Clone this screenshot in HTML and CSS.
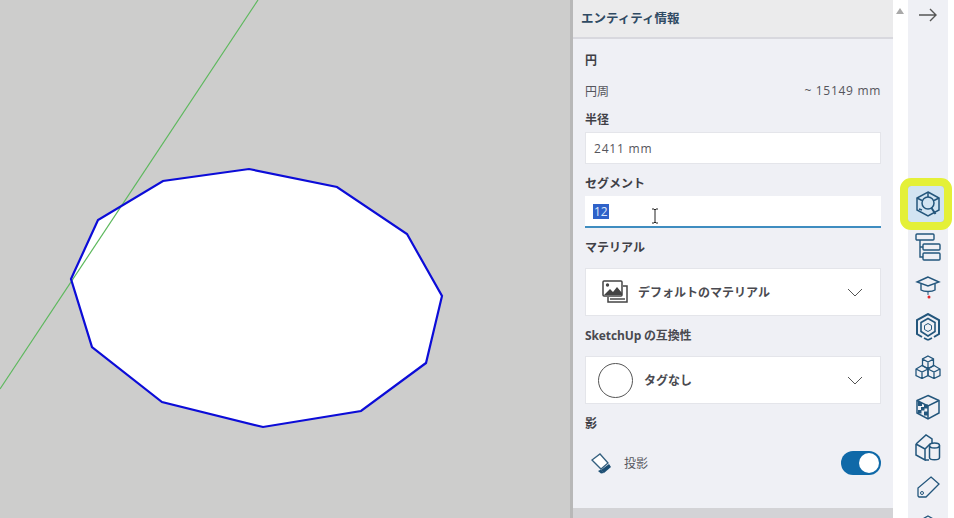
FILE: index.html
```html
<!DOCTYPE html>
<html lang="ja">
<head>
  <meta charset="UTF-8">
  <title>エンティティ情報</title>
  <link rel="stylesheet" href="styles.css">
</head>
<body>

  <!-- Viewport -->
  <div class="viewport">
    <svg class="scene" viewBox="0 0 570 518" width="570" height="518">
      <polygon points="71,279 98,220 163,181 249,169 337,187 407,234 442,296 426,363 361,411 263,427 162,402 92,347" fill="#fff"/>
      <line x1="258" y1="0" x2="0" y2="389" stroke="#5cb85c" stroke-width="1.2"/>
      <polygon points="71,279 98,220 163,181 249,169 337,187 407,234 442,296 426,363 361,411 263,427 162,402 92,347" fill="none" stroke="#0c0cd8" stroke-width="2.2"/>
    </svg>
  </div>

  <!-- Panel -->
  <div class="panel">
    <div class="panel-head">エンティティ情報</div>
    <div class="panel-body">
      <div class="label first">円</div>
      <div class="row-info">
        <span>円周</span>
        <span class="latin">~ 15149 mm</span>
      </div>
      <div class="label">半径</div>
      <div class="field latin">2411 mm</div>
      <div class="label label-seg">セグメント</div>
      <div class="field field-active latin">
        <span class="selected">12</span>
        <svg class="ibeam" width="8" height="16" viewBox="0 0 8 16">
          <path d="M1 1h2l1 1 1-1h2M4 2v12M1 15h2l1-1 1 1h2" fill="none" stroke="#222" stroke-width="1"/>
        </svg>
      </div>
      <div class="label label-mat">マテリアル</div>
      <div class="select">
        <svg class="mat-icon" width="26" height="24" viewBox="0 0 26 24">
          <rect x="1" y="1" width="19" height="15" rx="1" fill="#fff" stroke="#444" stroke-width="1.5"/>
          <path d="M2 15l6-6 3 3 4-5 5 6v2H2z" fill="#444"/>
          <circle cx="5.5" cy="5" r="1.7" fill="#444"/>
          <path d="M21 6h4v16H6v-5" fill="none" stroke="#444" stroke-width="1.5"/>
          <path d="M8 19h15" stroke="#777" stroke-width="2"/>
        </svg>
        <span class="select-text">デフォルトのマテリアル</span>
        <svg class="chevron" width="16" height="9" viewBox="0 0 16 9"><path d="M1 1l7 7 7-7" fill="none" stroke="#555" stroke-width="1"/></svg>
      </div>
      <div class="label label-compat"><span class="latin">SketchUp</span> の互換性</div>
      <div class="select">
        <span class="tag-circle"></span>
        <span class="select-text">タグなし</span>
        <svg class="chevron" width="16" height="9" viewBox="0 0 16 9"><path d="M1 1l7 7 7-7" fill="none" stroke="#555" stroke-width="1"/></svg>
      </div>
      <div class="label label-shadow">影</div>
      <div class="row-shadow">
        <svg width="22" height="22" viewBox="0 0 22 22">
          <path d="M2 8l8-6 8 9-7 6z" fill="#fff" stroke="#35607f" stroke-width="1.3"/>
          <path d="M11 18l8-6 2 3-7 6z" fill="#1d4f74"/>
          <path d="M8 19l3-1.500 3 3.500-3 .5z" fill="#1d4f74"/>
        </svg>
        <span class="shadow-text">投影</span>
        <span class="toggle"><span class="knob"></span></span>
      </div>
    </div>
    <div class="panel-foot"></div>
  </div>

  <!-- Scroll gutter -->
  <div class="gutter"><span class="arrow-up"></span></div>

  <!-- Tool bar -->
  <div class="tools">
    <div class="tool tool-arrow">
      <svg width="20" height="14" viewBox="0 0 20 14"><path d="M1 7h17M12 1l6 6-6 6" fill="none" stroke="#555" stroke-width="1.4"/></svg>
    </div>
    <div class="tool tool-active">
      <svg width="26" height="28" viewBox="0 0 26 28"><g fill="none" stroke="#23567c" stroke-width="1.5"><path d="M13 2l11 6v12l-11 6L2 20V8z"/><circle cx="13" cy="13" r="6"/><path d="M16.500 18l4 6" stroke-width="2"/><path d="M2 8l5 2.500M24 8l-5 2.500M13 2v5M7 20l-3-1"/></g></svg>
    </div>
    <div class="tool">
      <svg width="28" height="28" viewBox="0 0 28 28"><g fill="none" stroke="#23567c" stroke-width="1.4"><rect x="2" y="1" width="18" height="6" rx="1"/><rect x="9" y="11" width="17" height="6" rx="1"/><rect x="9" y="20" width="17" height="7" rx="1"/><path d="M6 7v17h3M6 14h3"/></g></svg>
    </div>
    <div class="tool">
      <svg width="26" height="24" viewBox="0 0 26 24"><path d="M13 2L2 7l11 4 11-4z" fill="none" stroke="#23567c" stroke-width="1.4"/><path d="M6 9v6c3 2 11 2 14 0V9" fill="none" stroke="#23567c" stroke-width="1.4"/><path d="M13 16v4" stroke="#23567c"/><circle cx="14" cy="22" r="1.500" fill="#e0262c"/></svg>
    </div>
    <div class="tool">
      <svg width="26" height="28" viewBox="0 0 26 28"><g fill="none" stroke="#23567c"><path d="M7 24l-5-3V7l11-6 11 6v14l-5 3" stroke-width="2"/><path d="M13 5.500L20 9.500v9L13 23l-7-4.500v-9z" stroke-width="1.600"/><path d="M13 10.500l3.500 2v4L13 18.500l-3.500-2v-4z" stroke-width="1"/><path d="M13 27l-4-2M13 27l4-2" stroke-width="1.800"/></g></svg>
    </div>
    <div class="tool">
      <svg width="26" height="24" viewBox="0 0 26 24"><g fill="none" stroke="#23567c" stroke-width="1.300"><path d="M13 1l5.500 3v6.500L13 13.500l-5.500-3V4zM7.500 4L13 7l5.500-3M13 7v6.500"/><path d="M7 10.500l6 3.500v6.500L7 23.500l-6-3V14zM1 14l6 3 6-3M7 17v6.500"/><path d="M19 10.500l6 3.500v6.500l-6 3-6-3V14zM13 14l6 3 6-3M19 17v6.500"/></g></svg>
    </div>
    <div class="tool">
      <svg width="26" height="26" viewBox="0 0 26 26"><g fill="none" stroke="#23567c" stroke-width="1.500"><path d="M13 1.500l11 5v12.500L13 25 2 19V6.500z"/><path d="M2 6.500L13 12l11-5.500M13 12v13"/></g><path d="M3 8h4v4H3zM9 10.500h4v4H9zM6 13h3.500v3.500H6zM3 16h3.500v3.500H3zM9 17.500h4v4H9z" fill="#23567c"/></svg>
    </div>
    <div class="tool">
      <svg width="26" height="28" viewBox="0 0 26 28"><g fill="none" stroke="#23567c" stroke-width="1.500"><path d="M1 11L11 2l6 4v4"/><path d="M1 11l9 5 5-5M1 11v11l9 5V16M10 27h4"/><ellipse cx="19.500" cy="12.500" rx="5" ry="2.500"/><path d="M14.500 12.500v12c0 3 10 3 10 0v-12"/></g></svg>
    </div>
    <div class="tool">
      <svg width="24" height="24" viewBox="0 0 24 24"><path d="M15 2l8 7-13 13H3l-1-1v-8z" fill="none" stroke="#23567c" stroke-width="1.300"/><circle cx="6" cy="18" r="1.500" fill="none" stroke="#23567c"/></svg>
    </div>
    <div class="tool tool-cut">
      <svg width="24" height="24" viewBox="0 0 24 24"><path d="M12 1l9 5v10l-9 5-9-5V6z" fill="none" stroke="#23567c" stroke-width="1.300"/></svg>
    </div>
  </div>

</body>
</html>
```

FILE: styles.css
```css
* { box-sizing: border-box; }
html, body {
  height: 100%;
  margin: 0;
  overflow: hidden;
}
body {
  display: flex;
  width: 954px;
  height: 518px;
  background: #fff;
  color: #4a4a50;
  font-family: 'Noto Sans CJK JP', 'Open Sans', sans-serif;
  font-size: 12px;
}
.latin {
  font-family: 'Open Sans', 'Noto Sans CJK JP', sans-serif;
}
.viewport {
  flex: 0 0 570px;
  background: #cdcdcc;
  overflow: hidden;
}
.scene {
  display: block;
}
.panel {
  flex: 0 0 323px;
  display: flex;
  flex-direction: column;
  height: 518px;
  background: #eff0f5;
  border-left: 3px solid #b8b8b8;
}
.panel-head {
  height: 39px;
  padding: 0 8px;
  line-height: 36px;
  background: #ebebec;
  border-bottom: 2px solid #d8d8de;
  font-size: 12.5px;
  font-weight: 700;
  color: #2f4a63;
}
.panel-body {
  flex: 1;
  padding: 0 12px;
}
.panel-foot {
  height: 10px;
  background: #d3d3d6;
}
.label {
  height: 18px;
  line-height: 18px;
  font-weight: 700;
  color: #3f3f46;
}
.label.first {
  margin-top: 12px;
}
.row-info {
  display: flex;
  justify-content: space-between;
  align-items: center;
  height: 18px;
  margin-top: 12px;
  margin-bottom: 11px;
  color: #55555c;
}
.row-info .latin {
  letter-spacing: 0.7px;
}
.field {
  display: flex;
  align-items: center;
  height: 32px;
  margin-top: 4px;
  padding: 0 8px;
  background: #fff;
  border: 1px solid #e4e5ea;
  letter-spacing: 0.8px;
  color: #55555c;
}
.label-seg {
  margin-top: 10px;
}
.field-active {
  position: relative;
  border: 0;
  border-bottom: 2px solid #3f8dc0;
}
.selected {
  padding: 0 1px;
  background: #2f62c9;
  color: #dfe9fb;
  line-height: 15px;
  letter-spacing: 0;
}
.ibeam {
  position: absolute;
  left: 66px;
  top: 12px;
}
.label-mat {
  margin-top: 10px;
}
.select {
  display: flex;
  align-items: center;
  height: 48px;
  margin-top: 12px;
  padding: 0 17px 0 12px;
  background: #fff;
  border: 1px solid #e4e5ea;
  font-weight: 700;
  color: #4a4a50;
}
.mat-icon {
  margin-left: 4px;
  margin-right: 10px;
}
.select-text {
  flex: 1;
  padding-bottom: 2px;
}
.tag-circle {
  width: 35px;
  height: 35px;
  margin-right: 11px;
  border: 1px solid #555;
  border-radius: 50%;
}
.label-compat {
  margin-top: 10px;
  letter-spacing: -0.1px;
  color: #4a4a50;
}
.label-shadow {
  margin-top: 10px;
}
.row-shadow {
  display: flex;
  align-items: center;
  height: 24px;
  margin-top: 19px;
  padding-left: 5px;
}
.shadow-text {
  flex: 1;
  margin-left: 12px;
  padding-bottom: 2px;
  color: #55555c;
}
.toggle {
  display: flex;
  justify-content: flex-end;
  align-items: center;
  width: 40px;
  height: 24px;
  padding-right: 2px;
  border-radius: 12px;
  background: #0f69a8;
}
.knob {
  width: 20px;
  height: 20px;
  border-radius: 50%;
  background: #fff;
}
.gutter {
  flex: 0 0 15px;
  padding: 8px 3px 0;
}
.arrow-up {
  display: block;
  width: 0;
  height: 0;
  border-left: 4px solid transparent;
  border-right: 4px solid transparent;
  border-bottom: 6px solid #a9a9a9;
}
.tools {
  flex: 0 0 40px;
  height: 518px;
  background: #eff0f5;
}
.tool {
  display: flex;
  justify-content: center;
  align-items: center;
  width: 40px;
  height: 40px;
}
.tool-arrow {
  height: 30px;
  margin-bottom: 156px;
}
.tool-active {
  position: relative;
  width: 36px;
  height: 36px;
  margin-bottom: 5px;
  padding-left: 4px;
  background: #d2e4f2;
  border-radius: 3px;
  outline: 8px solid #e4f038;
  box-shadow: 0 0 2px #666;
}
.tool-cut {
  height: 11px;
  padding-top: 8px;
  align-items: flex-start;
  overflow: hidden;
}
```
